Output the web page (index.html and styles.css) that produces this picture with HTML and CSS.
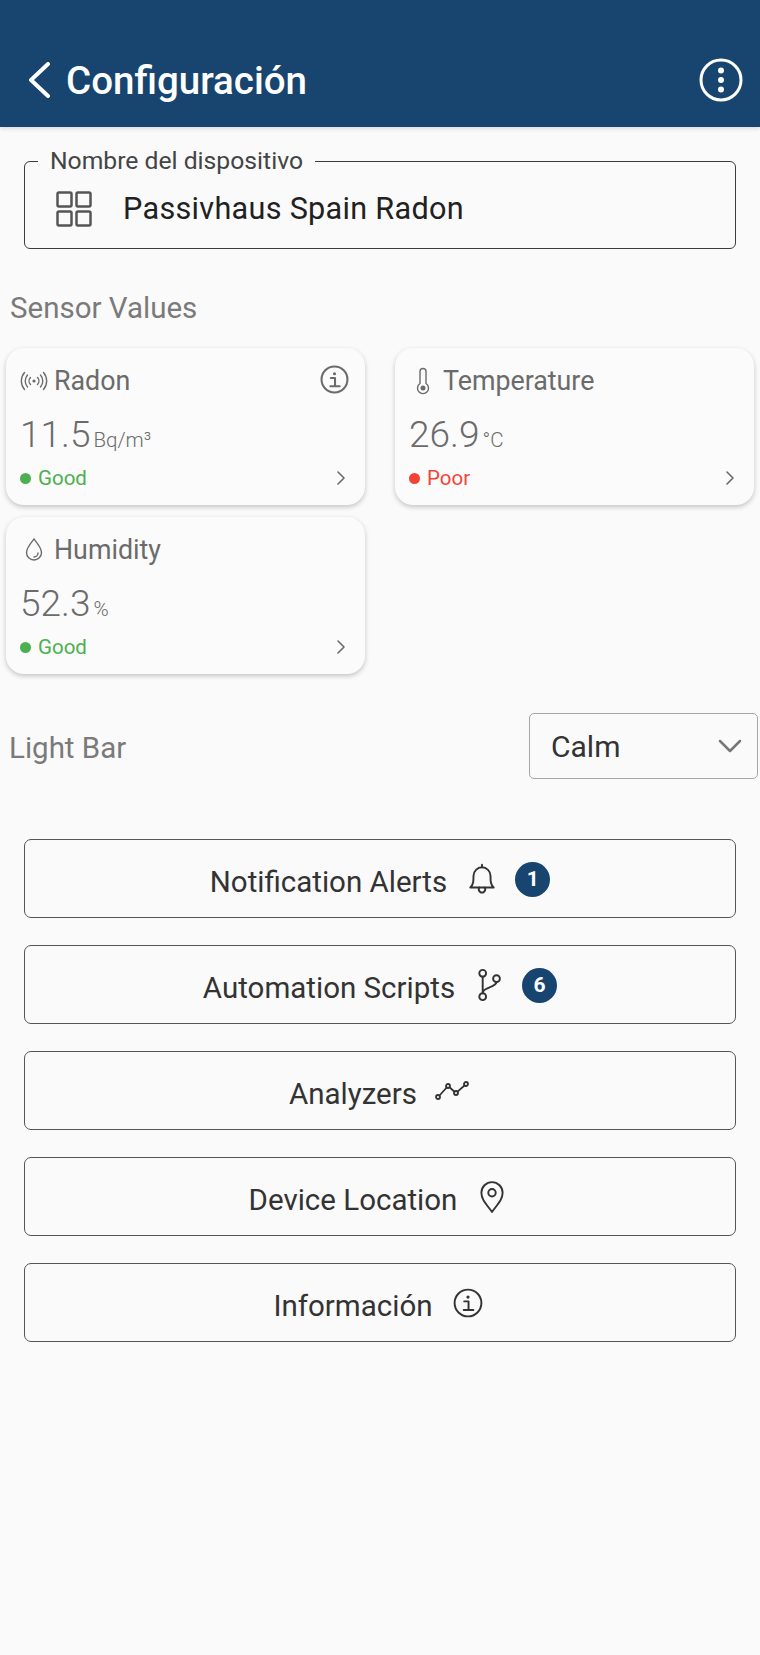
FILE: index.html
```html
<!DOCTYPE html>
<html lang="es">
<head>
  <meta charset="UTF-8" />
  <title>Configuración</title>
  <meta name="viewport" content="width=device-width, initial-scale=1.0" />
  <link rel="stylesheet" href="styles.css">
</head>
<body>

  <header class="top-bar">
    <svg class="back-icon" viewBox="0 0 24 36"><path d="M21 2 4 18l17 16"/></svg>
    <h1>Configuración</h1>
    <svg class="more-icon" viewBox="0 0 44 44">
      <circle class="ring" cx="22" cy="22" r="20"/>
      <circle cx="22" cy="12.5" r="3"/><circle cx="22" cy="22" r="3"/><circle cx="22" cy="31.5" r="3"/>
    </svg>
  </header>

  <fieldset class="name-field">
    <legend>Nombre del dispositivo</legend>
    <svg class="grid-icon" viewBox="0 0 36 36">
      <rect x="1.5" y="1.5" width="14" height="14" rx="1.5"/><rect x="20.5" y="1.5" width="14" height="14" rx="1.5"/>
      <rect x="1.5" y="20.5" width="14" height="14" rx="1.5"/><rect x="20.5" y="20.5" width="14" height="14" rx="1.5"/>
    </svg>
    <span class="name-value">Passivhaus Spain Radon</span>
  </fieldset>

  <h2 class="section-title">Sensor Values</h2>

  <div class="sensor-grid">
    <div class="sensor-card">
      <div class="card-head">
        <svg class="sensor-icon" viewBox="0 0 28 24">
          <circle class="dot" cx="14" cy="12" r="1.6"/>
          <path d="M10.500 8.500a5 5 0 0 0 0 7M17.500 8.500a5 5 0 0 1 0 7M7.500 6a9 9 0 0 0 0 12M20.500 6a9 9 0 0 1 0 12M4.500 3.500a13 13 0 0 0 0 17M23.500 3.500a13 13 0 0 1 0 17"/>
        </svg>
        <span class="card-name">Radon</span>
        <svg class="card-info" viewBox="0 0 28 28">
          <circle cx="14" cy="14" r="12.500"/>
          <circle class="dot" cx="14" cy="8.500" r="1.500"/>
          <path d="M10.500 12.500H14.500V20M10 20.500h9"/>
        </svg>
      </div>
      <div class="card-value"><span class="num">11.5</span><span class="unit">Bq/m³</span></div>
      <div class="card-foot">
        <span class="status good">Good</span>
        <svg class="chevron" viewBox="0 0 10 16"><path d="M2 2l6 6-6 6"/></svg>
      </div>
    </div>

    <div class="sensor-card">
      <div class="card-head">
        <svg class="sensor-icon" viewBox="0 0 28 28">
          <path d="M11 16.500V4.500a3 3 0 0 1 6 0v12a5.500 5.500 0 1 1-6 0z"/>
          <circle class="dot" cx="14" cy="21" r="2.500"/>
        </svg>
        <span class="card-name">Temperature</span>
      </div>
      <div class="card-value"><span class="num">26.9</span><span class="unit">°C</span></div>
      <div class="card-foot">
        <span class="status poor">Poor</span>
        <svg class="chevron" viewBox="0 0 10 16"><path d="M2 2l6 6-6 6"/></svg>
      </div>
    </div>

    <div class="sensor-card">
      <div class="card-head">
        <svg class="sensor-icon" viewBox="0 0 28 28">
          <path d="M14 3c4 5 7.500 9 7.500 13.500a7.500 7.500 0 0 1-15 0C6.500 12 10 8 14 3z"/>
          <path d="M18 17a4 4 0 0 1-4 4"/>
        </svg>
        <span class="card-name">Humidity</span>
      </div>
      <div class="card-value"><span class="num">52.3</span><span class="unit">%</span></div>
      <div class="card-foot">
        <span class="status good">Good</span>
        <svg class="chevron" viewBox="0 0 10 16"><path d="M2 2l6 6-6 6"/></svg>
      </div>
    </div>
  </div>

  <div class="light-row">
    <span class="section-title">Light Bar</span>
    <div class="light-select">
      <span>Calm</span>
      <svg viewBox="0 0 24 14"><path d="M2 2l10 10L22 2"/></svg>
    </div>
  </div>

  <div class="menu">
    <button class="menu-btn">
      <span>Notification Alerts</span>
      <svg class="btn-icon" viewBox="0 0 28 32">
        <path d="M3 24c3-3 3-6 3-11a8 8 0 0 1 16 0c0 5 0 8 3 11z"/>
        <path d="M11.500 24a3 3 0 1 0 5 0M14 5V2.500"/>
      </svg>
      <span class="badge">1</span>
    </button>
    <button class="menu-btn">
      <span>Automation Scripts</span>
      <svg class="btn-icon branch" viewBox="0 0 28 32">
        <circle cx="9" cy="5" r="3.200"/><circle cx="9" cy="27" r="3.200"/><circle cx="22" cy="10" r="3.200"/>
        <path d="M9 8.200v15.600M22 13.200c0 5-13 5-13 10"/>
      </svg>
      <span class="badge">6</span>
    </button>
    <button class="menu-btn">
      <span>Analyzers</span>
      <svg class="btn-icon wide" viewBox="0 0 34 20">
        <circle cx="3" cy="16" r="2"/><circle cx="13" cy="5" r="2"/><circle cx="21" cy="12" r="2"/><circle cx="31" cy="3" r="2"/>
        <path d="M4.500 14.500 11.700 6.500M14.500 6.300l5 4.400M22.500 10.700 29.500 4.500"/>
      </svg>
    </button>
    <button class="menu-btn">
      <span>Device Location</span>
      <svg class="btn-icon tail" viewBox="0 0 28 32">
        <path d="M14 30C8 22 4 18 4 12a10 10 0 0 1 20 0c0 6-4 10-10 18z"/>
        <circle cx="14" cy="12" r="3.500"/>
      </svg>
    </button>
    <button class="menu-btn">
      <span>Información</span>
      <svg class="btn-icon tail" viewBox="0 0 28 28">
        <circle cx="14" cy="14" r="12.500"/>
        <circle class="dot" cx="14" cy="8.500" r="1.500"/>
        <path d="M10.500 12.500H14.500V20M10 20.500h9"/>
      </svg>
    </button>
  </div>

</body>
</html>
```

FILE: styles.css
```css
* {
  box-sizing: border-box;
}
body {
  margin: 0;
  background-color: #fafafa;
  color: #212121;
  font-family: Roboto, 'Noto Sans', sans-serif;
}
svg {
  fill: none;
  stroke: currentColor;
  stroke-linecap: round;
  stroke-linejoin: round;
  flex-shrink: 0;
}
svg .dot {
  fill: currentColor;
  stroke: none;
}

.top-bar {
  height: 127px;
  padding: 33px 17px 0 27px;
  display: flex;
  align-items: center;
  background-color: #18456f;
  color: #fff;
  box-shadow: 0 2px 4px rgba(0, 0, 0, 0.12);
}
.top-bar h1 {
  margin: 0 0 0 15px;
  font-size: 38.500px;
  font-weight: 500;
  flex: 1;
}
.back-icon {
  width: 24px;
  height: 36px;
  stroke-width: 4;
}
.more-icon {
  width: 44px;
  height: 44px;
}
.more-icon .ring {
  stroke-width: 3;
  fill: none;
  stroke: #fff;
}
.more-icon circle {
  fill: #fff;
  stroke: none;
}

.name-field {
  margin: 22px 24px 0;
  height: 100px;
  padding: 0;
  display: flex;
  align-items: center;
  border: 1.500px solid #3c3c3c;
  border-radius: 6px;
}
.name-field legend {
  margin-left: 13px;
  padding: 0 12px;
  font-size: 24.700px;
  line-height: 24px;
  color: #444;
}
.grid-icon {
  width: 36px;
  height: 36px;
  margin: 0 0 4px 31px;
  color: #555;
  stroke-width: 2.500;
}
.name-value {
  margin: 0 0 4px 31px;
  font-size: 30.600px;
  letter-spacing: 0.3px;
}

.section-title {
  margin: 0;
  font-size: 29.500px;
  font-weight: 400;
  color: #7a7a7a;
}
h2.section-title {
  margin: 40px 0 0 10px;
  line-height: 38px;
}

.sensor-grid {
  margin: 21px 6px 0;
  display: grid;
  grid-template-columns: 359px 359px;
  column-gap: 30px;
  row-gap: 12px;
}
.sensor-card {
  height: 157px;
  padding: 15px 14px 0 14px;
  border-radius: 18px;
  background-color: #fbfbfb;
  box-shadow: 0 2px 5px rgba(0, 0, 0, 0.22);
  color: #6b6b6b;
}
.card-head {
  height: 36px;
  display: flex;
  align-items: center;
}
.sensor-icon {
  width: 28px;
  height: 28px;
  stroke-width: 1.400;
}
.card-name {
  margin-left: 6px;
  font-size: 26.800px;
  flex: 1;
}
.card-info {
  width: 29px;
  height: 29px;
  margin: -3px 2px 0 0;
  stroke-width: 2;
}
.card-value {
  margin: 14px 0 0;
  display: flex;
  align-items: baseline;
}
.num {
  font-size: 37px;
  font-weight: 300;
  line-height: 44px;
}
.unit {
  margin-left: 3px;
  font-size: 20.500px;
  font-weight: 300;
}
.card-foot {
  margin-top: 9px;
  display: flex;
  align-items: center;
  justify-content: space-between;
  padding-right: 5px;
}
.status {
  display: flex;
  align-items: center;
  font-size: 20.500px;
  line-height: 24px;
}
.status::before {
  content: "";
  width: 11px;
  height: 11px;
  margin-right: 7px;
  border-radius: 50%;
  background-color: currentColor;
}
.good {
  color: #4caf50;
}
.poor {
  color: #f44336;
}
.chevron {
  width: 10px;
  height: 16px;
  stroke-width: 1.600;
}

.light-row {
  margin-top: 39px;
  padding: 0 2px 0 9px;
  display: flex;
  align-items: center;
  justify-content: space-between;
}
.light-row .section-title {
  margin-top: 4px;
}
.light-select {
  width: 229px;
  height: 66px;
  padding: 0 15px 0 21px;
  display: flex;
  align-items: center;
  justify-content: space-between;
  border: 1.500px solid #a6a6a6;
  border-radius: 5px;
  font-size: 30px;
  color: #333;
}
.light-select svg {
  width: 24px;
  height: 14px;
  color: #777;
  stroke-width: 2.500;
}

.menu {
  margin: 60px 24px 0;
  display: flex;
  flex-direction: column;
  gap: 27px;
}
.menu-btn {
  height: 79px;
  padding: 6px 0 0;
  display: flex;
  align-items: center;
  justify-content: center;
  gap: 20px;
  background: none;
  border: 1.500px solid #555;
  border-radius: 7px;
  font-family: inherit;
  font-size: 29.500px;
  color: #333;
}
.btn-icon {
  width: 30px;
  height: 34px;
  margin-top: -6px;
  stroke-width: 1.800;
}
.btn-icon.wide {
  width: 34px;
  height: 20px;
  margin-left: -2px;
  margin-right: 2px;
}
.btn-icon.branch {
  margin-left: -2px;
  margin-right: 1px;
}
.btn-icon.tail {
  margin-right: 4px;
}
.badge {
  width: 35px;
  height: 35px;
  margin: -5px 0 0 -2px;
  display: flex;
  align-items: center;
  justify-content: center;
  border-radius: 50%;
  background-color: #18456f;
  color: #fff;
  font-size: 21px;
  font-weight: 700;
}
```
